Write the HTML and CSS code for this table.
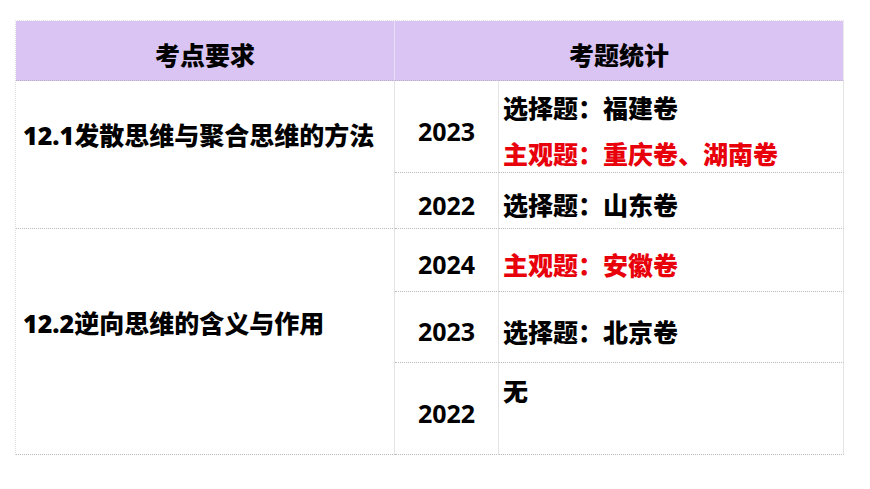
FILE: index.html
```html
<!DOCTYPE html>
<html lang="zh-CN">
<head>
<meta charset="utf-8">
<title>考点要求 / 考题统计</title>
<link rel="stylesheet" href="styles.css">
</head>
<body>
<div class="table">
  <div class="cell head">考点要求</div>
  <div class="cell head head-wide">考题统计</div>

  <div class="cell point point-a">12.1发散思维与聚合思维的方法</div>
  <div class="cell year r2">2023</div>
  <div class="cell stat r2">
    <div>选择题：福建卷</div>
    <div class="red">主观题：重庆卷、湖南卷</div>
  </div>
  <div class="cell year r3">2022</div>
  <div class="cell stat r3"><div>选择题：山东卷</div></div>

  <div class="cell point point-b">12.2逆向思维的含义与作用</div>
  <div class="cell year r4">2024</div>
  <div class="cell stat r4"><div class="red">主观题：安徽卷</div></div>
  <div class="cell year r5">2023</div>
  <div class="cell stat r5"><div>选择题：北京卷</div></div>
  <div class="cell year r6">2022</div>
  <div class="cell stat stat-top r6"><div>无</div></div>
</div>
</body>
</html>
```
FILE: styles.css
```css
* { box-sizing: border-box; }

html, body {
  margin: 0;
  padding: 0;
  background: #ffffff;
}

body {
  font-family: "Open Sans", "Noto Sans CJK SC", sans-serif;
  font-weight: 700;
  font-size: 25px;
  color: #000000;
}

.table {
  display: grid;
  grid-template-columns: 379px 104px 345px;
  grid-template-rows: 60px 92px 56px 63px 71px 92px;
  margin: 20px 0 0 15px;
  width: max-content;
  border-top: 1px dotted #e2e2e2;
  border-left: 1px dotted #dedede;
}

.cell {
  display: flex;
  border-right: 1px solid #e4e4e4;
  border-bottom: 1px dotted #bcbcbc;
  line-height: 30px;
}

.head {
  grid-row: 1;
  grid-column: 1;
  background: #dac4f4;
  justify-content: center;
  align-items: center;
  padding-top: 9px;
  border-right: 1px solid #e8def6;
  border-bottom: 1px dotted #b9b0c6;
}

.head,
.point,
.stat {
  font-weight: 900;
}

.head-wide {
  grid-column: 2 / 4;
  border-right: 1px solid #ebebeb;
}

.point {
  grid-column: 1;
  align-items: flex-start;
  padding-left: 7px;
}

.point-a {
  grid-row: 2 / 4;
  padding-top: 39px;
}

.point-b {
  grid-row: 4 / 7;
  padding-top: 79px;
}

.year {
  grid-column: 2;
  justify-content: center;
  align-items: center;
  padding-top: 8px;
}

.stat {
  grid-column: 3;
  flex-direction: column;
  justify-content: center;
  padding-left: 4px;
  padding-top: 9px;
  line-height: 46px;
}

.stat-top {
  justify-content: flex-start;
  padding-top: 5px;
}

.red { color: #e8000b; }

.r2 { grid-row: 2; }
.r3 { grid-row: 3; }
.r4 { grid-row: 4; }
.r5 { grid-row: 5; }
.r6 { grid-row: 6; }
```
